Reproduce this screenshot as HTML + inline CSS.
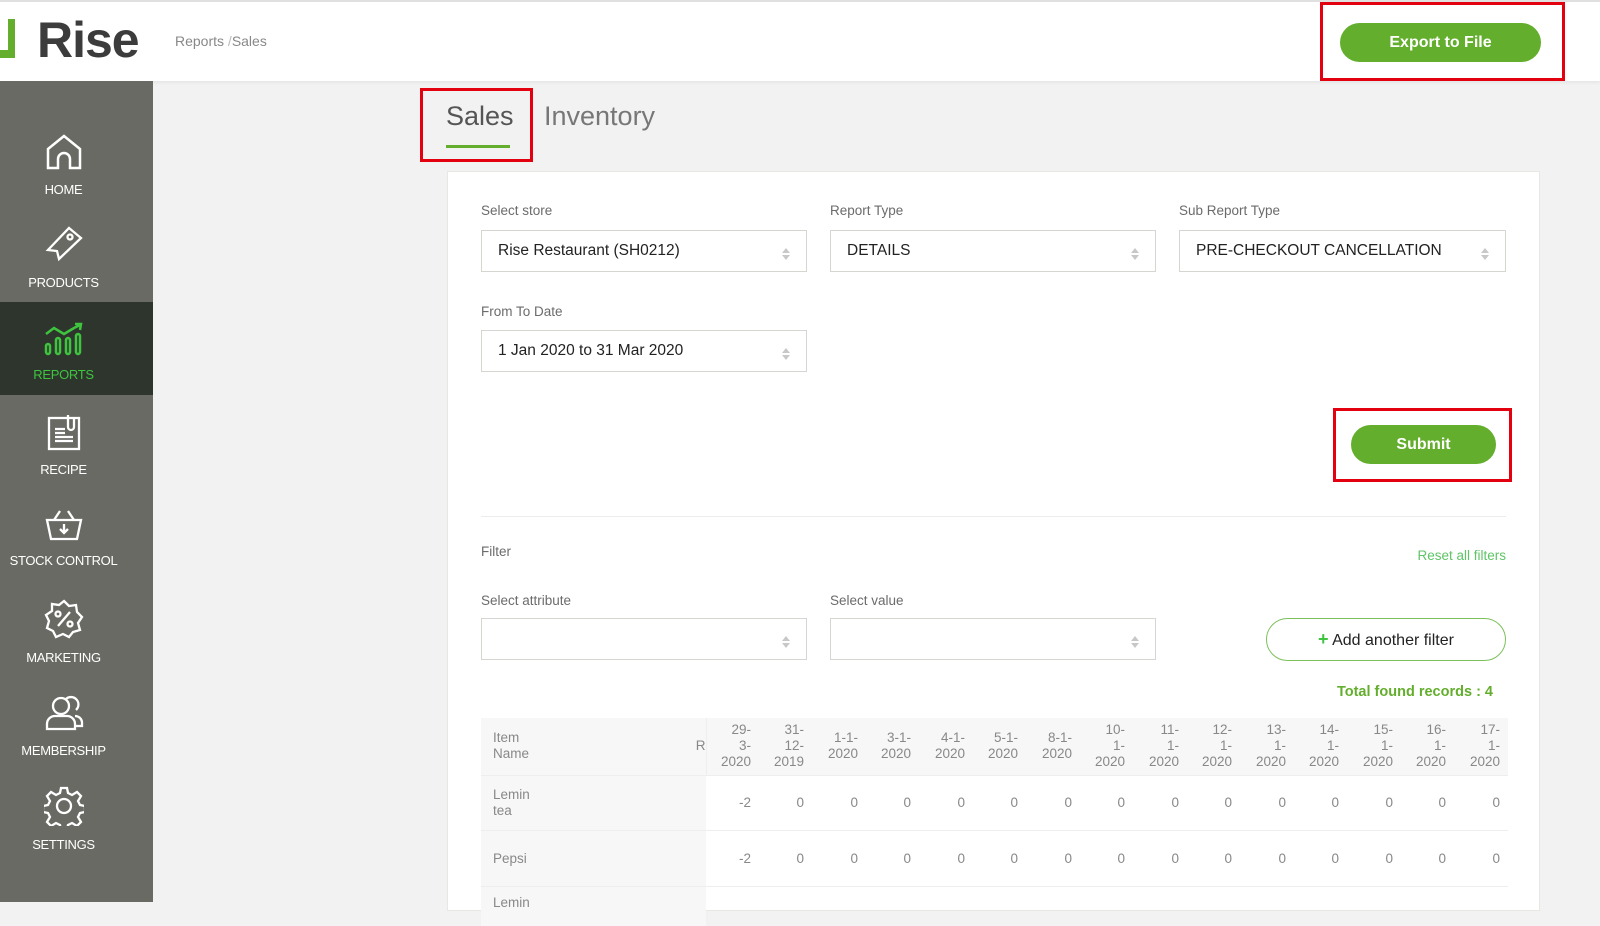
<!DOCTYPE html>
<html><head><meta charset="utf-8"><style>
*{box-sizing:border-box;margin:0;padding:0}
body{width:1600px;height:902px;overflow:hidden;background:#f2f2f2;font-family:"Liberation Sans",sans-serif;position:relative}
.a{position:absolute}
.hdr{left:0;top:0;width:1600px;height:81px;background:#fff;border-top:2px solid #e0e0e0;box-shadow:0 2px 3px rgba(0,0,0,.05)}
.side{left:0;top:81px;width:153px;height:821px;background:#6a6a64}
.nav{position:absolute;left:0;width:127px;text-align:center;color:#fff;font-size:13px;letter-spacing:-.3px}
.nav svg{display:block;margin:0 auto 11px}
.lbl{font-size:13.5px;color:#6b6b6b}
.sel{position:absolute;height:42px;border:1px solid #d4d6d0;background:#fff;font-size:15.5px;color:#222;padding:11px 16px}
.sel:after{content:"";position:absolute;right:16px;top:13px;width:0;height:0;border:4px solid transparent;border-bottom:5px solid #c8c8c8;}
.sel:before{content:"";position:absolute;right:16px;top:24px;width:0;height:0;border:4px solid transparent;border-top:5px solid #c8c8c8;}
.btn{position:absolute;background:#63ae2c;color:#fff;font-weight:bold;font-size:16px;text-align:center;border-radius:22px}
.red{position:absolute;border:3px solid #e3000f}
table{border-collapse:collapse;font-size:13.5px;color:#888}
td,th{font-weight:normal}
</style></head><body>
<div class="a hdr"></div>
<div class="a" style="left:0;top:19px;width:15px;height:39px;background:#63ae2c"></div>
<div class="a" style="left:0;top:19px;width:8px;height:31px;background:#fff"></div>
<div class="a" style="left:37px;top:11px;font-size:50px;font-weight:bold;color:#3c3c3c;letter-spacing:-1px">Rise</div>
<div class="a" style="left:175px;top:33px;font-size:14px;color:#888">Reports <span style="color:#bbb">/</span>Sales</div>
<div class="red" style="left:1320px;top:2px;width:245px;height:79px"></div>
<div class="btn" style="left:1340px;top:23px;width:201px;height:39px;line-height:39px">Export to File</div>

<div class="a side"></div>
<div class="a" style="left:0;top:302px;width:153px;height:93px;background:#2d352d"></div>
<div class="nav" style="top:133px"><svg width="38" height="38" viewBox="0 0 38 38" fill="none" stroke="#fff" stroke-width="2.5"><path d="M3 16 L19 3 L35 16 V35 H25 V26 A6 6 0 0 0 13 26 V35 H3 Z"/></svg>HOME</div>
<div class="nav" style="top:226px"><svg width="38" height="38" viewBox="0 0 38 38" fill="none" stroke="#fff" stroke-width="2.3"><path d="M24 2 L36 12 L14 33 L12 25 L3 24 Z"/><circle cx="25" cy="11" r="2.5"/></svg>PRODUCTS</div>
<div class="nav" style="top:322px;color:#3ec43e"><svg width="40" height="34" viewBox="0 0 40 34" fill="none" stroke="#3ec43e" stroke-width="2.5"><path d="M2 12 L10 6 L20 12 L30 6 L36 3"/><path d="M31 2 L37 2 L36 8"/><rect x="2" y="22" width="4" height="10" rx="2"/><rect x="12" y="16" width="4" height="16" rx="2"/><rect x="22" y="16" width="4" height="16" rx="2"/><rect x="32" y="12" width="4" height="20" rx="2"/></svg>REPORTS</div>
<div class="nav" style="top:413px"><svg width="36" height="38" viewBox="0 0 36 38" fill="none" stroke="#fff" stroke-width="2.3"><rect x="3" y="5" width="30" height="31"/><path d="M22 2 V14 A3 3 0 0 0 28 14 V4"/><path d="M9 16h10M9 20h10M9 24h18M9 28h18"/></svg>RECIPE</div>
<div class="nav" style="top:508px"><svg width="40" height="34" viewBox="0 0 40 34" fill="none" stroke="#fff" stroke-width="2.3"><path d="M3 12 H37 L33 31 H7 Z"/><path d="M10 12 L16 3 M30 12 L24 3"/><path d="M20 16 V25 M16 21 L20 25 L24 21"/></svg>STOCK CONTROL</div>
<div class="nav" style="top:599px"><svg width="40" height="40" viewBox="0 0 40 40" fill="none" stroke="#fff" stroke-width="2.3"><path d="M20 2 L25 7 L32 6 L33 13 L38 18 L34 24 L36 31 L29 33 L25 38 L19 35 L12 38 L9 32 L3 29 L5 22 L2 16 L8 12 L8 5 L15 6 Z"/><path d="M14 27 L26 13"/><circle cx="14" cy="15" r="2.5"/><circle cx="26" cy="25" r="2.5"/></svg>MARKETING</div>
<div class="nav" style="top:694px"><svg width="40" height="38" viewBox="0 0 40 38" fill="none" stroke="#fff" stroke-width="2.3"><circle cx="17" cy="12" r="8"/><path d="M3 35 V30 A8 8 0 0 1 11 22 H23 A8 8 0 0 1 31 30 V35 Z"/><path d="M22 5 A7 7 0 0 1 32 16 M31 22 A7 7 0 0 1 38 28 V32 H32"/></svg>MEMBERSHIP</div>
<div class="nav" style="top:786px"><svg width="40" height="40" viewBox="0 0 40 40" fill="none" stroke="#fff" stroke-width="2.3"><path d="M17 2h6l1 5 4 2 5-3 4 4-3 5 2 4 5 1v6l-5 1-2 4 3 5-4 4-5-3-4 2-1 5h-6l-1-5-4-2-5 3-4-4 3-5-2-4-5-1v-6l5-1 2-4-3-5 4-4 5 3 4-2z"/><circle cx="20" cy="20" r="7"/></svg>SETTINGS</div>

<div class="red" style="left:420px;top:88px;width:113px;height:74px"></div>
<div class="a" style="left:446px;top:101px;font-size:27px;color:#555">Sales</div>
<div class="a" style="left:446px;top:145px;width:64px;height:3px;background:#63ae2c"></div>
<div class="a" style="left:544px;top:101px;font-size:27px;color:#777">Inventory</div>

<div class="a" style="left:447px;top:171px;width:1093px;height:740px;background:#fff;border:1px solid #e6e8e2"></div>
<div class="a lbl" style="left:481px;top:203px">Select store</div>
<div class="a lbl" style="left:830px;top:203px">Report Type</div>
<div class="a lbl" style="left:1179px;top:203px">Sub Report Type</div>
<div class="sel" style="left:481px;top:230px;width:326px">Rise Restaurant (SH0212)</div>
<div class="sel" style="left:830px;top:230px;width:326px">DETAILS</div>
<div class="sel" style="left:1179px;top:230px;width:327px">PRE-CHECKOUT CANCELLATION</div>
<div class="a lbl" style="left:481px;top:304px">From To Date</div>
<div class="sel" style="left:481px;top:330px;width:326px">1 Jan 2020 to 31 Mar 2020</div>

<div class="red" style="left:1333px;top:408px;width:179px;height:74px"></div>
<div class="btn" style="left:1351px;top:425px;width:145px;height:39px;line-height:39px">Submit</div>
<div class="a" style="left:481px;top:516px;width:1025px;height:1px;background:#ececec"></div>
<div class="a lbl" style="left:481px;top:544px">Filter</div>
<div class="a" style="left:1380px;top:548px;width:126px;text-align:right;font-size:13.5px;color:#5fc466">Reset all filters</div>
<div class="a lbl" style="left:481px;top:593px">Select attribute</div>
<div class="a lbl" style="left:830px;top:593px">Select value</div>
<div class="sel" style="left:481px;top:618px;width:326px"></div>
<div class="sel" style="left:830px;top:618px;width:326px"></div>
<div class="a" style="left:1266px;top:618px;width:240px;height:43px;border:1px solid #7cc05a;border-radius:22px;text-align:center;line-height:41px;font-size:16px;color:#222"><b style="color:#3ec43e;font-size:18px">+</b> Add another filter</div>
<div class="a" style="left:1250px;top:684px;width:243px;text-align:right;font-size:14.5px;font-weight:bold;color:#63ae2c">Total found records : 4</div>

<div class="a" style="left:481px;top:718px">
<table>
<tr style="background:#f7f7f7;height:57px"><td style="width:225px;padding-left:12px;text-align:left;line-height:16px;vertical-align:middle;position:relative">Item<br>Name<span style="position:absolute;right:0;top:20px">R</span></td>
<td style="width:53px;text-align:right;padding-right:8px;line-height:16px;background:#f7f7f7;border-left:1px solid #eee">29-<br>3-<br>2020</td>
<td style="width:53px;text-align:right;padding-right:8px;line-height:16px">31-<br>12-<br>2019</td>
<td style="width:54px;text-align:right;padding-right:8px;line-height:16px">1-1-<br>2020</td>
<td style="width:53px;text-align:right;padding-right:8px;line-height:16px">3-1-<br>2020</td>
<td style="width:54px;text-align:right;padding-right:8px;line-height:16px">4-1-<br>2020</td>
<td style="width:53px;text-align:right;padding-right:8px;line-height:16px">5-1-<br>2020</td>
<td style="width:54px;text-align:right;padding-right:8px;line-height:16px">8-1-<br>2020</td>
<td style="width:53px;text-align:right;padding-right:8px;line-height:16px">10-<br>1-<br>2020</td>
<td style="width:54px;text-align:right;padding-right:8px;line-height:16px">11-<br>1-<br>2020</td>
<td style="width:53px;text-align:right;padding-right:8px;line-height:16px">12-<br>1-<br>2020</td>
<td style="width:54px;text-align:right;padding-right:8px;line-height:16px">13-<br>1-<br>2020</td>
<td style="width:53px;text-align:right;padding-right:8px;line-height:16px">14-<br>1-<br>2020</td>
<td style="width:54px;text-align:right;padding-right:8px;line-height:16px">15-<br>1-<br>2020</td>
<td style="width:53px;text-align:right;padding-right:8px;line-height:16px">16-<br>1-<br>2020</td>
<td style="width:54px;text-align:right;padding-right:8px;line-height:16px">17-<br>1-<br>2020</td></tr>
<tr style="height:55px;border-top:1px solid #eee"><td style="background:#f7f7f7;padding-left:12px;line-height:16px">Lemin<br>tea</td><td style="text-align:right;padding-right:8px">-2</td><td style="text-align:right;padding-right:8px">0</td><td style="text-align:right;padding-right:8px">0</td><td style="text-align:right;padding-right:8px">0</td><td style="text-align:right;padding-right:8px">0</td><td style="text-align:right;padding-right:8px">0</td><td style="text-align:right;padding-right:8px">0</td><td style="text-align:right;padding-right:8px">0</td><td style="text-align:right;padding-right:8px">0</td><td style="text-align:right;padding-right:8px">0</td><td style="text-align:right;padding-right:8px">0</td><td style="text-align:right;padding-right:8px">0</td><td style="text-align:right;padding-right:8px">0</td><td style="text-align:right;padding-right:8px">0</td><td style="text-align:right;padding-right:8px">0</td></tr>
<tr style="height:56px;border-top:1px solid #eee;border-bottom:1px solid #eee"><td style="background:#f7f7f7;padding-left:12px">Pepsi</td><td style="text-align:right;padding-right:8px">-2</td><td style="text-align:right;padding-right:8px">0</td><td style="text-align:right;padding-right:8px">0</td><td style="text-align:right;padding-right:8px">0</td><td style="text-align:right;padding-right:8px">0</td><td style="text-align:right;padding-right:8px">0</td><td style="text-align:right;padding-right:8px">0</td><td style="text-align:right;padding-right:8px">0</td><td style="text-align:right;padding-right:8px">0</td><td style="text-align:right;padding-right:8px">0</td><td style="text-align:right;padding-right:8px">0</td><td style="text-align:right;padding-right:8px">0</td><td style="text-align:right;padding-right:8px">0</td><td style="text-align:right;padding-right:8px">0</td><td style="text-align:right;padding-right:8px">0</td></tr>
<tr style="height:40px"><td style="background:#f7f7f7;padding-left:12px;vertical-align:top;padding-top:8px">Lemin</td><td colspan="15"></td></tr>
</table></div>
</body></html>
